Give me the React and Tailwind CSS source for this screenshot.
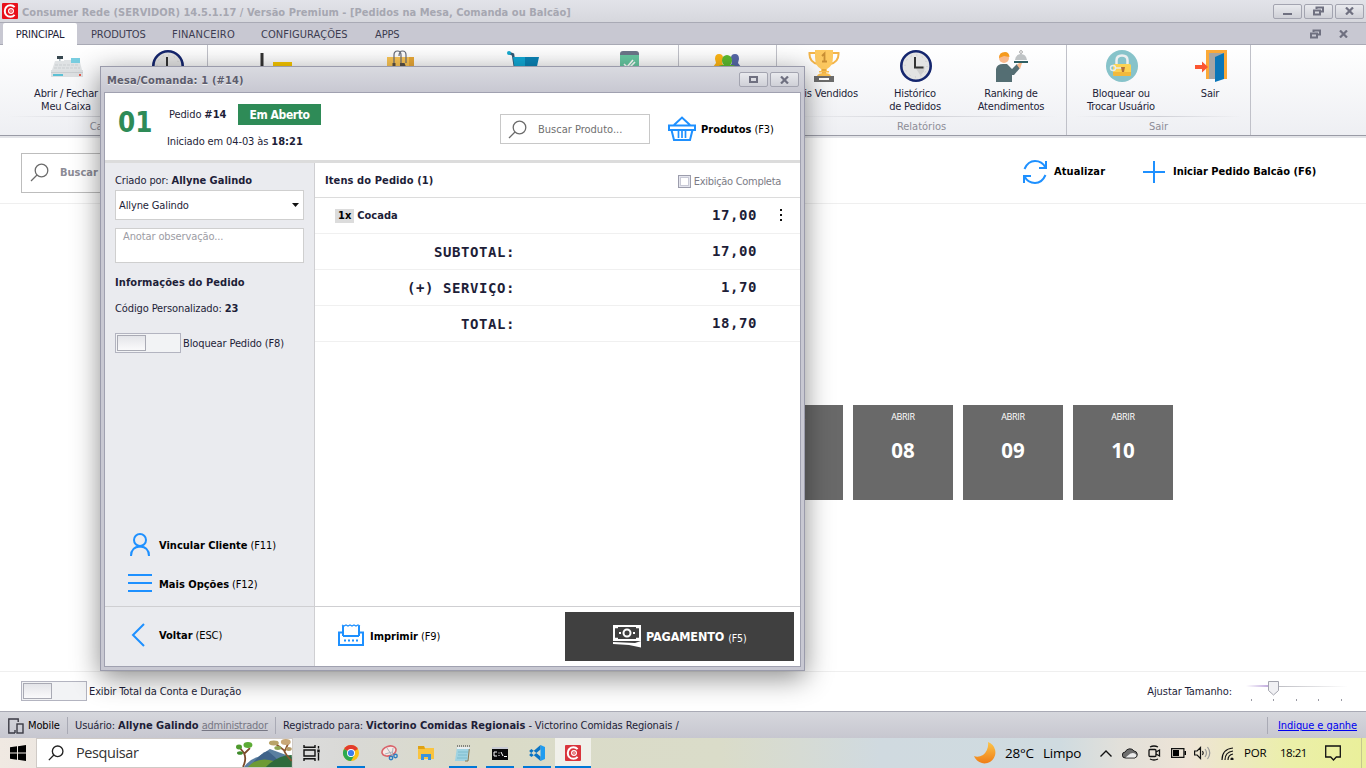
import React from "react";

const BLUE = "#1e90ff";

function MinIcon() {
  return <svg width="9" height="9" viewBox="0 0 9 9"><rect x="0" y="6" width="9" height="2" fill="#6f7080" /></svg>;
}
function RestoreIcon() {
  return (
    <svg width="11" height="10" viewBox="0 0 11 10" fill="none" stroke="#6f7080">
      <path d="M3.500 3V1.500H10v4H7.500" strokeWidth="2" />
      <rect x="1" y="4.500" width="6" height="4" strokeWidth="2" />
    </svg>
  );
}
function MaxIcon() {
  return <svg width="9" height="7" viewBox="0 0 9 7"><rect x="1" y="1" width="7" height="5" fill="none" stroke="#6f7080" strokeWidth="2" /></svg>;
}
function CloseIcon() {
  return <svg width="9" height="8" viewBox="0 0 9 8"><path d="M1 .5l7 7M8 .5l-7 7" stroke="#6f7080" strokeWidth="2.200" /></svg>;
}
function WinButton({ children, className = "" }) {
  return (
    <div className={`flex items-center justify-center rounded-[2px] border border-[#a3a4b0] bg-gradient-to-b from-[#e9eaee] to-[#cfd0d7] ${className}`}>
      {children}
    </div>
  );
}

function Logo({ size = 16, color = "#e8101a" }) {
  return (
    <svg width={size} height={size} viewBox="0 0 16 16">
      <rect width="16" height="16" rx="1" fill={color} />
      <path d="M12.600 4.200C11 2.400 9.500 2.300 8.500 2.300C5 2.300 2.800 4.800 2.800 8s2.200 5.700 5.700 5.700c1 0 2.500-.1 4.100-1.900" fill="none" stroke="#fff" strokeWidth="2" />
      <circle cx="9" cy="8" r="2.400" fill="none" stroke="#fff" strokeWidth="1.200" />
      <circle cx="9" cy="8" r=".8" fill="#fff" />
    </svg>
  );
}

function SearchGlyph({ size = 19, color = "#6b6b6b", width = 1.3 }) {
  return (
    <svg width={size} height={size} viewBox="0 0 19 19" fill="none" stroke={color} strokeWidth={width}>
      <circle cx="11.500" cy="7.500" r="6.300" />
      <path d="M7 12L1 18" />
    </svg>
  );
}

function RegisterIcon() {
  return (
    <svg width="32" height="32" viewBox="0 0 32 32">
      <rect x="6" y="6" width="6" height="3" fill="#37474f" />
      <rect x="8" y="9" width="1.500" height="3" fill="#b0bec5" />
      <path d="M4 11h9v-1h7v2h9l2 8H1z" fill="#dfe2e4" />
      <rect x="20" y="8" width="9" height="5" fill="#79cde0" />
      <path d="M4 15h24M3 18h26" stroke="#c9cdd0" strokeDasharray="3 1" />
      <rect x="0" y="20" width="32" height="7" fill="#dcdfe1" />
      <rect x="0" y="22" width="32" height="1" fill="#c9cdd0" />
      <rect x="2" y="24" width="10" height="2" fill="#5cc0d4" />
      <rect x="28" y="24" width="2" height="2" fill="#e35b4e" />
    </svg>
  );
}
function ClockIcon() {
  return (
    <svg width="32" height="32" viewBox="0 0 32 32">
      <circle cx="16" cy="16" r="14.700" fill="#e3e3e3" stroke="#15266e" strokeWidth="2.600" />
      <path d="M15 17l10-.5-1 5-3.500 4z" fill="#cfcfcf" />
      <circle cx="16" cy="16" r="11" fill="none" stroke="#c4c4c4" strokeWidth="1" strokeDasharray="1 4.760" />
      <path d="M15 7v10.500h8.500" fill="none" stroke="#333" strokeWidth="2" />
    </svg>
  );
}
function ChartIcon() {
  return (
    <svg width="32" height="32" viewBox="0 0 32 32">
      <path d="M2 3v27h29" stroke="#333" strokeWidth="3" fill="none" />
      <rect x="13" y="12" width="19" height="5" fill="#f7c600" />
    </svg>
  );
}
function BagIcon() {
  return (
    <svg width="32" height="32" viewBox="0 0 32 32">
      <rect x="3" y="7" width="27" height="25" fill="#f9c455" />
      <rect x="25" y="7" width="5" height="25" fill="#e8a838" />
      <path d="M10 13V5q0-4 3.500-4T17 5v8M15 6q0-5 3.500-5T22 5v8" fill="none" stroke="#666b78" strokeWidth="1.200" />
      <path d="M8.500 13h3v4h-3zM16 13h4.500l1.500 4h-6z" fill="#5a5146" />
    </svg>
  );
}
function CartIcon() {
  return (
    <svg width="32" height="32" viewBox="0 0 32 32">
      <path d="M2 3l4 1.500 2 13" stroke="#305a78" strokeWidth="2.500" fill="none" />
      <circle cx="2" cy="3" r="2" fill="#14a9cf" />
      <path d="M6 7h13v14H8z" fill="#12a8d4" />
      <path d="M18 7h14l-3 14H18z" fill="#0b83b5" />
    </svg>
  );
}
function ChecklistIcon() {
  return (
    <svg width="32" height="32" viewBox="0 0 32 32">
      <rect x="7" y="1" width="19" height="30" rx="3" fill="#6b7589" />
      <rect x="7" y="5" width="19" height="22" fill="#67c7a1" />
      <path d="M11 14l3 3 6-7M15 16l2 1 5-5" fill="none" stroke="#fff" strokeWidth="1.600" />
    </svg>
  );
}
function PeopleIcon() {
  return (
    <svg width="32" height="32" viewBox="0 0 32 32">
      <path d="M4 9q0-5 4-5t4 4l-1 5 3 4H2l3-4z" fill="#fdb515" />
      <path d="M20 8q0-4 4-4t4 5l-1 4 3 4H18l3-4z" fill="#5668a8" />
      <ellipse cx="16" cy="10.500" rx="5" ry="5.500" fill="#5dbb2f" />
      <rect x="5" y="15" width="22" height="14" rx="6" fill="#5dbb2f" />
    </svg>
  );
}
function TrophyIcon() {
  return (
    <svg width="32" height="32" viewBox="0 0 32 32">
      <path d="M7 3H1.500q-.5 9 8.500 11M25 3h5.500q.5 9-8.500 11" fill="none" stroke="#f3b54a" strokeWidth="2" />
      <path d="M7 0h18v7q0 9-6 12v2h-6v-2Q7 16 7 7z" fill="#fdc960" />
      <path d="M14 19h4v6h-4z" fill="#e8a93c" />
      <path d="M11 21h10v1.500H11zM9 26q1-3 7-3t7 3z" fill="#fbc050" />
      <path d="M14 6l2.500-2.500V11M14 11.500h5" stroke="#c98f35" strokeWidth="1.800" fill="none" />
      <rect x="6" y="26" width="20" height="6" fill="#6c6c6c" />
      <rect x="11" y="28" width="10" height="2" fill="#fff" />
    </svg>
  );
}
function WaiterIcon() {
  return (
    <svg width="32" height="32" viewBox="0 0 32 32">
      <circle cx="8" cy="8" r="5" fill="#f8b98c" />
      <path d="M3 8q0-6 6-6 4 0 4.500 5L8 6z" fill="#f59a1d" />
      <path d="M0 32V19q1-5 7-5h4l5 5 5-5 3 4-6 7h-2v7z" fill="#546e73" />
      <path d="M21 15l3 4 2-6-2-1z" fill="#f8b98c" />
      <path d="M19 10q1-6 6-6t6 6z" fill="#bfc3c5" />
      <circle cx="25" cy="2" r="1.400" fill="none" stroke="#aaa" />
      <rect x="18" y="11" width="14" height="2" fill="#2f5f63" />
    </svg>
  );
}
function LockIcon() {
  return (
    <svg width="32" height="32" viewBox="0 0 32 32">
      <circle cx="16" cy="16" r="16" fill="#87c3ca" />
      <path d="M10.500 16v-5.500q0-5 5.500-5t5.500 5V16" fill="none" stroke="#eceff0" strokeWidth="2.500" />
      <rect x="7" y="14" width="18" height="12" rx="1.500" fill="#fcd354" />
      <path d="M7 22h18v2.500q0 1.500-1.500 1.500h-15Q7 26 7 24.500z" fill="#f1b93c" />
      <circle cx="7" cy="18" r="2.500" fill="none" stroke="#e7ecec" strokeWidth="1.400" />
      <path d="M9.500 18H17v2" stroke="#e7ecec" strokeWidth="1.500" fill="none" />
      <path d="M15 17h4l-1 5h-2z" fill="#b0713a" />
    </svg>
  );
}
function DoorIcon() {
  return (
    <svg width="32" height="32" viewBox="0 0 32 32">
      <rect x="11" y="0" width="21" height="29" fill="#fba938" />
      <rect x="14" y="3" width="15" height="26" fill="#a5a5a5" />
      <path d="M20 7l9-4v26l-9 3z" fill="#0a76b8" />
      <path d="M0 15h7v-3.500L13 17l-6 5.500V19H0z" fill="#fb5632" />
    </svg>
  );
}

function RibbonItem({ icon, lines = [], className = "", iconClass = "" }) {
  return (
    <div className={`flex w-20 shrink-0 flex-col items-center pt-[5px] ${className}`}>
      <div className={iconClass}>{icon}</div>
      <div className="mt-[5px] whitespace-nowrap text-center leading-[13px] tracking-[-0.200px]">
        {lines.map((l) => <div key={l}>{l}</div>)}
      </div>
    </div>
  );
}
function RibbonGroup({ width, label, children }) {
  return (
    <div className={`flex shrink-0 flex-col border-r border-[#c0c1c9] ${width}`}>
      <div className="flex h-[72px]">{children}</div>
      <div className="mx-2 h-px bg-gradient-to-r from-transparent via-[#cfd0d6] to-transparent" />
      <div className="pt-px text-center leading-[17px] text-[#8d8d97]">{label}</div>
    </div>
  );
}

function Toggle() {
  return (
    <div className="flex h-5 w-[66px] border border-[#b3b4c0] bg-[#f2f3f5] p-px">
      <div className="h-4 w-[29px] border border-[#a9aab4] bg-gradient-to-b from-[#e4e5e9] to-[#fafafb]" />
    </div>
  );
}

function Tile({ n }) {
  return (
    <div className="flex h-[95px] w-[100px] flex-col items-center bg-[#696969] text-white">
      <div className="mt-[6px] font-['Open_Sans',sans-serif] text-[9px] leading-[11px] tracking-[-0.300px]">ABRIR</div>
      <div className="mt-[15px] font-['Open_Sans',sans-serif] text-[20.500px] font-bold leading-[27px]">{n}</div>
    </div>
  );
}

function Row({ label, value, first }) {
  return (
    <div className="flex h-9 items-center border-b border-[#f0f0f0] font-['DejaVu_Sans_Mono',monospace] text-[14px] font-bold tracking-[0.570px]">
      {first ? (
        <div className="flex w-[200px] items-center gap-[3px] pl-5 pt-px font-['DejaVu_Sans_Condensed','DejaVu_Sans',sans-serif] text-[11px] tracking-normal">
          <span className="bg-[#dcdcdc] px-[3px] leading-[14px] text-black">1x</span>
          <span>Cocada</span>
        </div>
      ) : (
        <div className="w-[200px] whitespace-nowrap text-right">{label}</div>
      )}
      <div className="w-[242px] pb-[2px] text-right">{value}</div>
      {first && (
        <svg className="mb-px ml-[23px]" width="2" height="12" viewBox="0 0 2 12"><path d="M0 0h2v2H0zM0 5h2v2H0zM0 10h2v2H0z" fill="#111" /></svg>
      )}
    </div>
  );
}

function Dialog() {
  return (
    <div className="absolute left-[100px] top-[66px] flex h-[605px] w-[705px] flex-col border border-[#9a9bab] bg-[#c8c8d2] px-[3px] pb-[3px] shadow-[0_7px_26px_rgba(0,0,0,0.45)]">
      <div className="-mx-[3px] flex h-[25px] shrink-0 items-center bg-gradient-to-b from-[#d9dae0] to-[#c8c8d2] pl-[6px] pr-[5px]">
        <div className="flex-1 pt-[2px] font-bold text-[#5c5c6c] tracking-[0.160px] [text-shadow:0_1px_0_#eee]">Mesa/Comanda: 1 (#14)</div>
        <WinButton className="mr-[2px] h-[15px] w-[29px]"><MaxIcon /></WinButton>
        <WinButton className="h-[15px] w-[29px]"><CloseIcon /></WinButton>
      </div>
      <div className="flex min-h-0 flex-1 flex-col border border-[#a0a1b0] bg-white">
        <div className="flex h-[70px] shrink-0 border-b-[3px] border-[#dcdcdc]">
          <div className="w-[62px] pl-[13px] pt-[13px] text-[27.500px] font-bold leading-8 text-[#2e8b57]">01</div>
          <div className="w-[333px] tracking-[-0.120px]">
            <div className="flex items-center pl-[2px] pt-[11px]">
              <div className="w-[69px] whitespace-nowrap">Pedido <b>#14</b></div>
              <div className="flex h-[21px] w-[83px] items-center justify-center bg-[#2e8b57] text-[12px] font-bold text-white tracking-[-0.400px]">Em Aberto</div>
            </div>
            <div className="mt-[10px] leading-[14px]">Iniciado em 04-03 às <b>18:21</b></div>
          </div>
          <div className="mt-[21px] flex h-[30px] w-[150px] items-center gap-[11px] border border-[#c8c8c8] pl-[7px] text-[#707070]">
            <SearchGlyph />
            <span className="pt-px">Buscar Produto...</span>
          </div>
          <div className="ml-[18px] mt-[21px] flex h-[30px] items-center gap-[5px] whitespace-nowrap tracking-[-0.120px] text-black">
            <svg width="28" height="26" viewBox="0 0 28 26" fill="none" stroke={BLUE} strokeWidth="2">
              <path d="M6 9L14 1.500 22 9M1 9.500h26v4.500H1zM3.500 14l2.500 10h16l2.500-10" />
              <path d="M10.500 15v7M14 15v7M17.500 15v7" strokeWidth="1.700" />
            </svg>
            <span className="pt-[2px]"><b>Produtos</b> (F3)</span>
          </div>
        </div>
        <div className="flex min-h-0 flex-1">
          <div className="flex w-[210px] flex-col border-r border-[#cfcfd2] bg-[#eaebef] tracking-[-0.120px]">
            <div className="flex-1 px-[10px] pt-[11px]">
              <div className="leading-[14px]">Criado por: <b>Allyne Galindo</b></div>
              <div className="mt-[2px] flex h-[30px] w-[189px] items-center justify-between border border-[#cfcfcf] bg-white pl-[3px] pr-1">
                <span className="pt-[2px]">Allyne Galindo</span>
                <svg width="7" height="4" viewBox="0 0 7 4"><path d="M0 0h7L3.500 4z" fill="#111" /></svg>
              </div>
              <div className="mt-2 h-[35px] w-[189px] border border-[#cfcfcf] bg-white pl-[7px] leading-[15px] text-[#9c9ca4]">Anotar observação...</div>
              <div className="mt-[13px] font-bold leading-[14px] tracking-[0.080px]">Informações do Pedido</div>
              <div className="mt-[12px] leading-[14px]">Código Personalizado: <b>23</b></div>
              <div className="mt-[17px] flex items-center gap-[2px]"><Toggle /><span className="pt-[2px]">Bloquear Pedido (F8)</span></div>
            </div>
            <div className="flex flex-col pb-[9px] text-black">
              <div className="flex h-[38px] items-center">
                <div className="flex w-[54px] pl-[25px]">
                  <svg width="20" height="24" viewBox="0 0 20 24" fill="none" stroke={BLUE} strokeWidth="2"><circle cx="10" cy="7" r="6" /><path d="M1 23q0-9 9-9.500 9 .5 9 9.500" /></svg>
                </div>
                <span className="pt-[2px]"><b>Vincular Cliente</b> (F11)</span>
              </div>
              <div className="flex h-[33px] items-end">
                <div className="flex w-[54px] pb-[5px] pl-[23px]">
                  <svg width="24" height="18" viewBox="0 0 24 18"><path d="M0 1h24M0 9h24M0 17h24" stroke={BLUE} strokeWidth="2" /></svg>
                </div>
                <span className="pb-[5px]"><b>Mais Opções</b> (F12)</span>
              </div>
            </div>
            <div className="flex h-[60px] items-center border-t border-[#cfcfd2] pb-[4px] text-black">
              <div className="flex w-[54px] pl-[26px]">
                <svg width="14" height="24" viewBox="0 0 14 24" fill="none" stroke={BLUE} strokeWidth="2"><path d="M13 1L2 12l11 11" /></svg>
              </div>
              <span className="pt-[3px]"><b>Voltar</b> (ESC)</span>
            </div>
          </div>
          <div className="flex flex-1 flex-col">
            <div className="flex h-[35px] items-center border-b border-[#dcdcdc] pl-[10px] pr-[19px] pt-[2px]">
              <div className="flex-1 font-bold tracking-[0.100px]">Itens do Pedido (1)</div>
              <div className="mr-[3px] h-[13px] w-[13px] border border-[#9c9dac] bg-[#e4e5ee] p-px"><div className="h-full w-full border border-[#c9cad6] bg-white" /></div>
              <div className="pt-[2px] text-[#7c7c86] tracking-[-0.300px]">Exibição Completa</div>
            </div>
            <Row first value="17,00" />
            <Row label="SUBTOTAL:" value="17,00" />
            <Row label="(+) SERVIÇO:" value="1,70" />
            <Row label="TOTAL:" value="18,70" />
            <div className="flex-1" />
            <div className="flex h-[60px] border-t border-[#cfcfd2] tracking-[-0.120px] text-black">
              <div className="flex w-[250px] items-center pl-[23px]">
                <svg className="mb-[3px]" width="26" height="22" viewBox="0 0 26 22" fill="none" stroke={BLUE} strokeWidth="2">
                  <path d="M5 12V2M21 12V2M5 12h16M5 8.500H1V21h24V8.500h-4" />
                  <path d="M4 1l2 1 2-1 2 1 2-1 2 1 2-1 2 1 2-1 2 1" strokeWidth="1.300" />
                  <path d="M6 16.500h14" strokeDasharray="2 2" />
                </svg>
                <span className="pl-[6px]"><b>Imprimir</b> (F9)</span>
              </div>
              <div className="mt-[5px] flex h-[49px] w-[229px] items-center bg-[#404040] pl-12 text-white">
                <svg width="28" height="23" viewBox="0 0 28 23" fill="none" stroke="#fff">
                  <path d="M1 1h26v14H1z" strokeWidth="2" />
                  <path d="M2 2h3M23 2h3M2 14h3M23 14h3" strokeWidth="2.500" />
                  <circle cx="14" cy="8" r="3.500" strokeWidth="2" />
                  <path d="M6 8h2M20 8h2" strokeWidth="2" />
                  <path d="M0 17l22 1 6-2v6.500L16 20 0 19z" fill="#fff" stroke="none" />
                </svg>
                <b className="pl-[5px] text-[12.500px] tracking-[-0.120px]!">PAGAMENTO</b>
                <span className="pl-1 pt-[2px] text-[10.500px]">(F5)</span>
              </div>
            </div>
          </div>
        </div>
      </div>
    </div>
  );
}

function TaskIcon({ children, bar, active, className = "" }) {
  return (
    <div className={`flex h-full shrink-0 flex-col items-center ${active ? "bg-[#f0f0ea]" : ""} ${className}`}>
      <div className="flex h-7 items-center pt-[2px]">{children}</div>
      {bar && <div className={`h-[2px] ${active ? "w-9" : "w-7"} bg-[#0078d7]`} />}
    </div>
  );
}

function Taskbar() {
  return (
    <div className="flex h-[30px] shrink-0 items-center bg-[linear-gradient(90deg,#f0e9e2_0px,#dcdcdc_293px,#d9d9d6_350px,#dadbc8_480px,#dadcc9_720px,#d6dbd4_800px,#d0dae0_880px,#cfdbe0_1060px,#e2e0da_1120px,#eee4d6_1190px,#ebefa9_1290px,#eaf09a_1366px)] font-['Open_Sans',sans-serif] text-black">
      <div className="flex w-9 justify-center">
        <svg width="16" height="16" viewBox="0 0 16 16"><path d="M0 2.300L7 1.300v6.200H0zM8 1.150L16 0v7.500H8zM0 8.500h7v6.200L0 13.700zM8 8.500h8V16l-8-1.150z" /></svg>
      </div>
      <div className="flex h-[30px] w-[257px] items-center border border-[#cfcac6] bg-white pl-[11px]">
        <SearchGlyph size={16} color="#222" width={1.6} />
        <span className="w-[173px] pl-[12px] text-[14.500px] tracking-[-0.400px] text-[#333]">Pesquisar</span>
        <svg width="56" height="28" viewBox="0 0 56 28">
          <path d="M8 28q6-8 14-10l12-8 22 8v10z" fill="#5a7fa0" />
          <path d="M14 28q10-14 18-16 8 6 16 16z" fill="#3f6389" />
          <path d="M12 28q10-11 26-6l16 6z" fill="#6d9b35" />
          <path d="M30 28q12-12 26-12v12z" fill="#2f6b3c" />
          <path d="M7 28q4-8 1-14l-4-5M8 15l6-6" stroke="#7a4a2a" strokeWidth="1.800" fill="none" />
          <ellipse cx="3" cy="8" rx="3" ry="2.500" fill="#4f9a2e" /><ellipse cx="12" cy="6" rx="4.500" ry="3" fill="#5cab36" /><ellipse cx="4" cy="14" rx="3" ry="1.800" fill="#3d8a2a" />
          <path d="M56 22q-6-6-8-11l-8-6M49 12l4-9" stroke="#8a5530" strokeWidth="1.800" fill="none" />
          <ellipse cx="38" cy="4" rx="5" ry="2.500" fill="#b9a46a" /><ellipse cx="50" cy="3" rx="5" ry="3" fill="#c9a878" /><ellipse cx="42" cy="9" rx="3.500" ry="2" fill="#8fa653" /><ellipse cx="53" cy="10" rx="3" ry="2" fill="#b59a66" />
        </svg>
      </div>
      <TaskIcon className="w-9">
        <svg className="ml-px" width="17" height="16" viewBox="0 0 17 16" fill="none" stroke="#111" strokeWidth="1.400"><path d="M1 0v2.200h11V0M1 16v-2.200h11V16M1 5h11v6H1zM15.500 1v2.500M15.500 8v7.500" /><path d="M15.500 4.500v3" strokeWidth="2.500" /></svg>
      </TaskIcon>
      <TaskIcon className="ml-1 w-9" bar>
        <svg width="16" height="16" viewBox="0 0 16 16">
          <circle cx="8" cy="8" r="8" fill="#fbc116" />
          <path d="M8 8L1.070 4A8 8 0 0 1 14.930 4z" fill="#e33b2e" />
          <path d="M8 8L1.070 4A8 8 0 0 0 8 16l3.460-6z" fill="#2da94f" />
          <circle cx="8" cy="8" r="4" fill="#fff" /><circle cx="8" cy="8" r="3.100" fill="#3b7ded" />
        </svg>
      </TaskIcon>
      <TaskIcon className="ml-[2px] w-9">
        <svg width="17" height="16" viewBox="0 0 17 16" fill="none"><ellipse cx="8" cy="6" rx="7.200" ry="4.800" transform="rotate(-18 8 6)" fill="#f6e9e6" stroke="#d8636a" strokeWidth="1.600" /><path d="M6 3l6 9M12 3l-1 9M4 9l7-2" stroke="#a9b4bc" /><circle cx="10" cy="13" r="1.700" stroke="#2f7fc1" strokeWidth="1.400" /><circle cx="14.500" cy="11" r="1.700" stroke="#2f7fc1" strokeWidth="1.400" /></svg>
      </TaskIcon>
      <TaskIcon className="w-[37px]">
        <svg width="16" height="14" viewBox="0 0 16 14"><path d="M0 0h6l1 2h9v11H0z" fill="#f9c440" /><path d="M0 0h6l1 3H0z" fill="#dfa214" /><path d="M3 14V8h10v6h-3v-3H6v3z" fill="#3a93dd" /></svg>
      </TaskIcon>
      <TaskIcon className="w-[37px]" bar>
        <svg width="15" height="17" viewBox="0 0 15 17"><path d="M2 2h12.500l-1.500 14H0z" fill="#9fd3e2" /><path d="M2 2h12.500v2H2z" fill="#e8eef0" /><path d="M2 1h13" stroke="#666" strokeWidth="1.500" strokeDasharray="1 1" /><path d="M3 7h10M3 10h9M2 13h10" stroke="#7cbccd" /><path d="M14.300 4l-1.300 12h-3" stroke="#8a7a55" fill="none" /></svg>
      </TaskIcon>
      <TaskIcon className="w-[37px]" bar>
        <svg width="16" height="13" viewBox="0 0 16 13"><rect width="16" height="13" fill="#0a0a0a" /><rect width="16" height="2" fill="#c9ccd4" /><path d="M5 5H2v4h3M7 5.500v1M7 8v1M9 5l2 4M12 9.500h3" stroke="#fff" fill="none" /></svg>
      </TaskIcon>
      <TaskIcon className="w-[37px]" bar>
        <svg width="16" height="16" viewBox="0 0 16 16"><path d="M11.500 0L16 2v12l-4.500 2z" fill="#1f9cf0" /><path d="M11.500 0v4.500L2.500 12 .5 10.500V9.500zM11.500 16v-4.500L2.500 4 .5 5.500v1z" fill="#0a74c4" /></svg>
      </TaskIcon>
      <TaskIcon className="w-9" bar active><Logo size={16} color="#d9343c" /></TaskIcon>
      <div className="flex-1" />
      <svg width="22" height="22" viewBox="0 0 22 22"><defs><linearGradient id="moon" x1="0" y1="0" x2="0" y2="1"><stop offset="0" stopColor="#fcc54a" /><stop offset="1" stopColor="#ef7d16" /></linearGradient></defs><path d="M14 0A11 11 0 1 1 0 14Q4 16 9 13Q15 8 14 0z" fill="url(#moon)" /></svg>
      <div className="flex w-[104px] gap-[9px] pl-[9px] text-[13.500px] tracking-[-0.200px]"><span>28°C</span><span>Limpo</span></div>
      <svg width="12" height="7" viewBox="0 0 12 7" fill="none" stroke="#111" strokeWidth="1.400"><path d="M.5 6.500L6 1l5.500 5.500" /></svg>
      <svg className="ml-[10px]" width="16" height="12" viewBox="0 0 16 12"><path d="M3.500 11a3 3 0 0 1-.3-6 5 5 0 0 1 8.800-1 3.600 3.600 0 0 1 .8 7z" fill="#6e6e6e" stroke="#222" /><path d="M3.500 10.500l5-4q4-1.500 6 1.500-.5 2.500-2 2.500z" fill="#ececec" /></svg>
      <svg className="ml-[10px]" width="13" height="16" viewBox="0 0 13 16" fill="none" stroke="#111" strokeWidth="1.300"><rect x="1" y="4.500" width="7" height="7" rx="1" /><path d="M8 7l3.500-2v6L8 9M2 2q4-2 8 0M2 14q4 2 8 0" /></svg>
      <svg className="ml-[10px]" width="15" height="10" viewBox="0 0 15 10"><path d="M.6 .6h12.300v8.800H.6z" fill="none" stroke="#111" strokeWidth="1.200" /><path d="M2 2h6v6H2zM13.500 3H15v4h-1.500z" /></svg>
      <svg className="ml-[8px]" width="17" height="14" viewBox="0 0 17 14" fill="none" stroke="#111" strokeWidth="1.200"><path d="M.6 5h2.500L6.500 1.500v11L3.100 9H.6zM8.500 5q1.500 2 0 4" /><path d="M11 3q3 4 0 8M13.500 1q4.500 6 0 12" stroke="#999" /></svg>
      <svg className="ml-[10px]" width="13" height="13" viewBox="0 0 13 13" fill="none" stroke="#111" strokeWidth="1.200"><path d="M1 13Q1 2 12 1M4 13Q4 5 12 4M7 13Q7 8 12 7" /><circle cx="11" cy="12" r="1" fill="#111" /></svg>
      <div className="w-[46px] pl-[10px] text-[11.500px] tracking-[-0.200px]">POR</div>
      <div className="w-[45px] text-[11.500px] tracking-[-0.500px]">18:21</div>
      <svg width="16" height="16" viewBox="0 0 16 16" fill="none" stroke="#111" strokeWidth="1.300"><path d="M.7 1h14.600v11h-4L8.500 15 5.700 12h-5z" /></svg>
      <div className="ml-[20px] h-full w-[5px] border-l border-[#c5c88e]" />
    </div>
  );
}

export default function App() {
  return (
    <div className="relative flex h-[768px] w-[1366px] flex-col overflow-hidden bg-white font-['DejaVu_Sans_Condensed','DejaVu_Sans',sans-serif] text-[11px] leading-[14px] text-[#1e1e38] [&_b]:tracking-normal">
      <div className="flex h-[23px] shrink-0 items-center border-b border-[#a9aab5] bg-gradient-to-b from-[#e2e3e9] to-[#d6d7dd] pl-[2px] pr-[2px]">
        <Logo />
        <div className="flex-1 pl-1 pt-[3px] font-bold text-[#a6a7b1] tracking-[0.035px]">Consumer Rede (SERVIDOR) 14.5.1.17 / Versão Premium - [Pedidos na Mesa, Comanda ou Balcão]</div>
        <div className="flex gap-[2px]">
          <WinButton className="h-[15px] w-[29px]"><MinIcon /></WinButton>
          <WinButton className="h-[15px] w-[29px]"><RestoreIcon /></WinButton>
          <WinButton className="h-[15px] w-[29px]"><CloseIcon /></WinButton>
        </div>
      </div>
      <div className="flex h-[22px] shrink-0 items-center border-b border-[#a9aab5] bg-[#c8c8d2] pl-[3px] text-[#3c3c50]">
        <div className="-mb-px flex h-[22px] w-[74px] items-center justify-center self-end rounded-t-[2px] bg-white pt-[2px] text-[#1e1e38] tracking-[-0.200px]">PRINCIPAL</div>
        <div className="w-[81px] pl-[14px] pt-[2px] tracking-[-0.120px]">PRODUTOS</div>
        <div className="w-[89px] pl-[14px] pt-[2px] tracking-[0.200px]">FINANCEIRO</div>
        <div className="w-[113px] pl-[14px] pt-[2px] tracking-[0.060px]">CONFIGURAÇÕES</div>
        <div className="flex-1 pl-[15px] pt-[2px] tracking-[-0.120px]">APPS</div>
        <RestoreIcon />
        <div className="w-[36px] pl-[18px]"><CloseIcon /></div>
        <div className="w-[9px]" />
      </div>
      <div className="flex h-[91px] shrink-0 border-b border-[#9a9ba6] bg-gradient-to-b from-white to-[#eeeff3]">
        <RibbonGroup width="w-[208px]" label="Caixa">
          <RibbonItem className="ml-[26px]" iconClass="ml-px" icon={<RegisterIcon />} lines={["Abrir / Fechar", "Meu Caixa"]} />
          <RibbonItem className="ml-[22px]" icon={<ClockIcon />} />
        </RibbonGroup>
        <RibbonGroup width="w-[471px]">
          <RibbonItem className="ml-[28px]" icon={<ChartIcon />} />
          <RibbonItem className="ml-[44px]" icon={<BagIcon />} />
          <RibbonItem className="ml-[43px]" icon={<CartIcon />} />
          <RibbonItem className="ml-[26px]" icon={<ChecklistIcon />} />
        </RibbonGroup>
        <RibbonGroup width="w-[98px]">
          <RibbonItem className="ml-[8px]" icon={<PeopleIcon />} />
        </RibbonGroup>
        <RibbonGroup width="w-[290px]" label="Relatórios">
          <RibbonItem className="ml-[7px]" icon={<TrophyIcon />} lines={["Mais Vendidos"]} />
          <RibbonItem className="ml-[11px]" iconClass="ml-[2px]" icon={<ClockIcon />} lines={["Histórico", "de Pedidos"]} />
          <RibbonItem className="ml-[16px]" iconClass="ml-[2px]" icon={<WaiterIcon />} lines={["Ranking de", "Atendimentos"]} />
        </RibbonGroup>
        <RibbonGroup width="w-[184px]" label="Sair">
          <RibbonItem className="ml-[14px]" iconClass="ml-[2px]" icon={<LockIcon />} lines={["Bloquear ou", "Trocar Usuário"]} />
          <RibbonItem className="ml-[9px]" iconClass="ml-[2px]" icon={<DoorIcon />} lines={["Sair"]} />
        </RibbonGroup>
      </div>
      <div className="h-[2px] shrink-0 bg-[#e3e4e8]" />
      <div className="flex h-[66px] shrink-0 items-center justify-between border-b border-[#efefef] pl-[21px] pr-[50px] pt-[2px] font-bold">
        <div className="mt-[3px] flex h-10 w-[200px] items-center gap-[11px] border border-[#bdbdbd] pb-px pl-2 text-[#8c8c96]"><SearchGlyph />Buscar</div>
        <div className="flex items-center text-black">
          <svg width="24" height="24" viewBox="0 0 24 24" fill="none" stroke={BLUE} strokeWidth="2"><path d="M1.500 9Q5 1 12 1q7 0 10.500 6.500M22.500 15Q19 23 12 23q-7 0-10.500-6.500" /><path d="M23 1v7h-7M1 23v-7h7" /></svg>
          <span className="w-[96px] pl-[7px] pt-px tracking-[0.100px]">Atualizar</span>
          <svg width="22" height="22" viewBox="0 0 22 22"><path d="M11 0v22M0 11h22" stroke={BLUE} strokeWidth="2" /></svg>
          <span className="w-[151px] whitespace-nowrap pl-[8px] pt-px">Iniciar Pedido Balcão (F6)</span>
        </div>
      </div>
      <div className="flex flex-1 items-start justify-end gap-[10px] pr-[193px] pt-[201px]">
        <Tile n="07" /><Tile n="08" /><Tile n="09" /><Tile n="10" />
      </div>
      <div className="flex h-10 shrink-0 items-center border-t border-[#efefef] pb-px pl-[21px] pr-[18px]">
        <Toggle />
        <div className="flex-1 pl-[2px] pt-px tracking-[-0.120px]">Exibir Total da Conta e Duração</div>
        <div className="pt-px tracking-[-0.080px]">Ajustar Tamanho:</div>
        <svg className="ml-[12px]" width="104" height="24" viewBox="0 0 104 24">
          <defs>
            <linearGradient id="tl" gradientUnits="userSpaceOnUse" x1="2" y1="0" x2="28" y2="0"><stop offset="0" stopColor="#fff" /><stop offset="1" stopColor="#b89ed8" /></linearGradient>
            <linearGradient id="tr" gradientUnits="userSpaceOnUse" x1="28" y1="0" x2="104" y2="0"><stop offset="0" stopColor="#b8b8be" /><stop offset="1" stopColor="#fff" /></linearGradient>
          </defs>
          <rect x="2" y="6" width="26" height="2" fill="url(#tl)" /><rect x="28" y="7" width="76" height="1" fill="url(#tr)" />
          <path d="M24.500 2.500h10v9L29.500 16l-5-4.500z" fill="#f1f1f4" stroke="#a3a4ae" />
          <path d="M7.500 20v2M29.500 20v2M52.500 20v2M74.500 20v2M97.500 20v2" stroke="#9a9aa4" />
        </svg>
      </div>
      <div className="flex h-[27px] shrink-0 items-center border-t border-[#a9aab5] bg-gradient-to-b from-[#d6d7dd] to-[#c7c7d0] pl-2 pr-[9px] pt-px tracking-[-0.120px]">
        <svg width="16" height="16" viewBox="0 0 16 16" fill="none" stroke="#3a3a44" strokeWidth="1.400"><path d="M7 15H.8V1h9.400v3" /><rect x="9" y="6" width="6" height="9" /><path d="M7 12v3" /></svg>
        <span className="w-[43px] pl-1 text-black">Mobile</span>
        <div className="h-[17px] w-px bg-[#a9aab5]" />
        <div className="w-[207px] whitespace-nowrap pl-[7px]">Usuário: <b>Allyne Galindo</b> <span className="text-[#777784] underline tracking-[-0.250px]">administrador</span></div>
        <div className="h-[17px] w-px bg-[#a9aab5]" />
        <div className="flex-1 pl-[7px]">Registrado para: <b>Victorino Comidas Regionais</b> - Victorino Comidas Regionais /</div>
        <div className="h-[17px] w-px bg-[#a9aab5]" />
        <span className="w-[89px] whitespace-nowrap pl-[10px] text-[#0000f0] underline tracking-[-0.080px]">Indique e ganhe</span>
      </div>
      <Taskbar />
      <Dialog />
    </div>
  );
}
